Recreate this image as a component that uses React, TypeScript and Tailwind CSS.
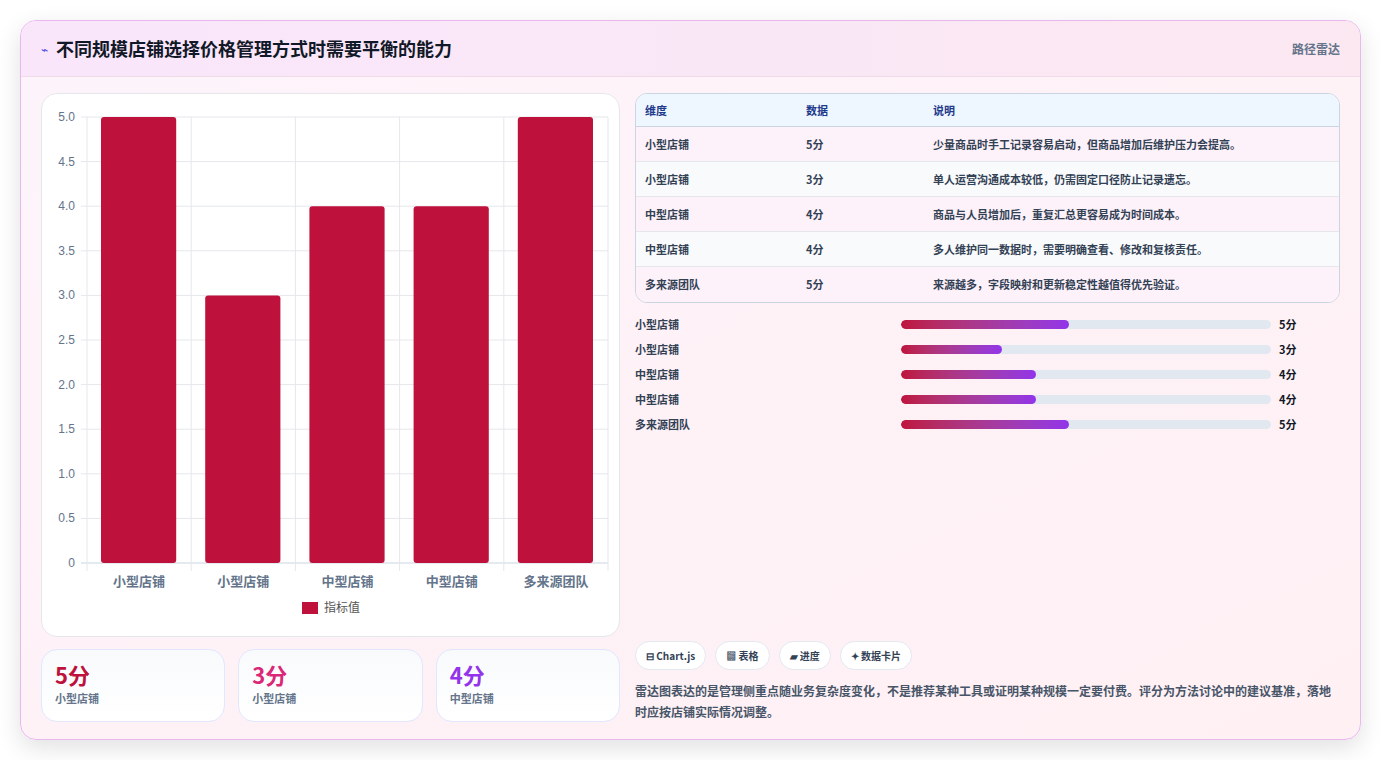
import React from "react";

const rows = [
  ["小型店铺", 5, "少量商品时手工记录容易启动，但商品增加后维护压力会提高。"],
  ["小型店铺", 3, "单人运营沟通成本较低，仍需固定口径防止记录遗忘。"],
  ["中型店铺", 4, "商品与人员增加后，重复汇总更容易成为时间成本。"],
  ["中型店铺", 4, "多人维护同一数据时，需要明确查看、修改和复核责任。"],
  ["多来源团队", 5, "来源越多，字段映射和更新稳定性越值得优先验证。"],
] as const;

function Chart() {
  const W = 579, H = 543;
  const x0 = 45, x1 = 566, y0 = 23, y1 = 469;
  const ticks = [0, 0.5, 1, 1.5, 2, 2.5, 3, 3.5, 4, 4.5, 5];
  const cw = (x1 - x0) / 5;
  const yv = (v: number) => y1 - (v / 5) * (y1 - y0);
  return (
    <svg width={W} height={H} className="block" style={{ fontFamily: "'Liberation Sans','Noto Sans CJK SC',sans-serif" }}>
      {ticks.map((t) => (
        <g key={t}>
          <line x1={x0 - 6} x2={x1} y1={yv(t)} y2={yv(t)} stroke={t === 0 ? "#cbd5e1" : "#e5e7eb"} />
          <text x={x0 - 12} y={yv(t) + 4} textAnchor="end" fontSize="12" fill="#64748b">{t === 0 ? "0" : t.toFixed(1)}</text>
        </g>
      ))}
      {[0, 1, 2, 3, 4, 5].map((i) => (
        <line key={i} x1={x0 + i * cw} x2={x0 + i * cw} y1={y0} y2={y1 + 8} stroke="#e5e7eb" />
      ))}
      {rows.map((r, i) => (
        <g key={i}>
          <rect x={x0 + i * cw + 14} y={yv(r[1])} width={cw - 29} height={y1 - yv(r[1])} rx="3" fill="#be123c" />
          <text x={x0 + i * cw + cw / 2} y={y1 + 23} textAnchor="middle" fontSize="13" fontWeight="600" fill="#64748b">{r[0]}</text>
        </g>
      ))}
      <rect x={260} y={508} width={16} height={12} fill="#be123c" />
      <text x={282} y={518} fontSize="12" fill="#555">指标值</text>
    </svg>
  );
}

export default function App() {
  return (
    <div className="w-[1381px] h-[760px] bg-white p-5" style={{ fontFamily: "'Noto Sans CJK SC','Liberation Sans',sans-serif" }}>
      <div className="h-[720px] rounded-2xl border border-[#e9b8ef] bg-gradient-to-br from-[#fdf4fb] to-[#fff0f3] shadow-[0_8px_24px_rgba(0,0,0,0.12)] flex flex-col overflow-hidden">
        <div className="h-[56px] shrink-0 flex items-center justify-between px-5 bg-gradient-to-r from-[#f9e6fb] to-[#fbe8f1] border-b border-[#f0dbe9]">
          <div className="flex items-center gap-2">
            <span className="text-[#4f46e5] text-xs">⌁</span>
            <span className="text-[18px] font-bold text-[#111827]">不同规模店铺选择价格管理方式时需要平衡的能力</span>
          </div>
          <span className="text-[12px] text-[#64748b] font-semibold">路径雷达</span>
        </div>
        <div className="flex gap-[15px] px-5 pt-4 pb-5 flex-1">
          <div className="w-[579px] flex flex-col gap-3">
            <div className="h-[544px] rounded-2xl bg-white border border-[#e5e7eb]"><Chart /></div>
            <div className="flex gap-[13px]">
              {[["5分", "text-[#be123c]", "小型店铺"], ["3分", "text-[#db2777]", "小型店铺"], ["4分", "text-[#9333ea]", "中型店铺"]].map((c, i) => (
                <div key={i} className="flex-1 h-[73px] rounded-2xl border border-[#e0e7ff] bg-gradient-to-b from-[#f8fafc] to-white px-[13px] pt-[10px]">
                  <div className={`text-[22px] font-bold leading-[28px] ${c[1]}`}>{c[0]}</div>
                  <div className="text-[11px] text-[#64748b] font-semibold mt-[2px]">{c[2]}</div>
                </div>
              ))}
            </div>
          </div>
          <div className="flex-1 flex flex-col">
            <div className="rounded-xl border border-[#cbd5e1] overflow-hidden text-[11px] font-semibold text-[#334155]">
              <div className="flex h-[33px] items-center bg-[#eef6ff] text-[#1e3a8a] border-b border-[#cbd5e1]">
                <div className="w-[170px] pl-[9px]">维度</div><div className="w-[127px]">数据</div><div>说明</div>
              </div>
              {rows.map((r, i) => (
                <div key={i} className={`flex h-[35px] items-center ${i % 2 ? "bg-[#f8fafc]" : "bg-[#fdf2fa]"} ${i < 4 ? "border-b border-[#e5e7eb]" : ""}`}>
                  <div className="w-[170px] pl-[9px]">{r[0]}</div><div className="w-[127px]">{r[1]}分</div><div>{r[2]}</div>
                </div>
              ))}
            </div>
            <div className="flex flex-col gap-[7px] mt-[12px]">
              {rows.map((r, i) => (
                <div key={i} className="flex items-center h-[18px] text-[11px] font-semibold text-[#334155]">
                  <div className="w-[266px]">{r[0]}</div>
                  <div className="w-[370px] h-[9px] rounded-full bg-[#e2e8f0] overflow-hidden">
                    <div className="h-full rounded-full bg-gradient-to-r from-[#be123c] to-[#9333ea]" style={{ width: `${(r[1] / 11) * 100}%` }} />
                  </div>
                  <div className="ml-2 text-[#111827] font-bold">{r[1]}分</div>
                </div>
              ))}
            </div>
            <div className="mt-auto">
              <div className="flex gap-[9px]">
                {["⊟ Chart.js", "▩ 表格", "▰ 进度", "✦ 数据卡片"].map((t) => (
                  <span key={t} className="h-[29px] px-[10px] flex items-center rounded-full border border-[#e2e8f0] bg-white text-[10px] font-bold text-[#334155]">{t}</span>
                ))}
              </div>
              <p className="mt-[10px] text-[12px] leading-[21px] text-[#475569] font-semibold">雷达图表达的是管理侧重点随业务复杂度变化，不是推荐某种工具或证明某种规模一定要付费。评分为方法讨论中的建议基准，落地时应按店铺实际情况调整。</p>
            </div>
          </div>
        </div>
      </div>
    </div>
  );
}
